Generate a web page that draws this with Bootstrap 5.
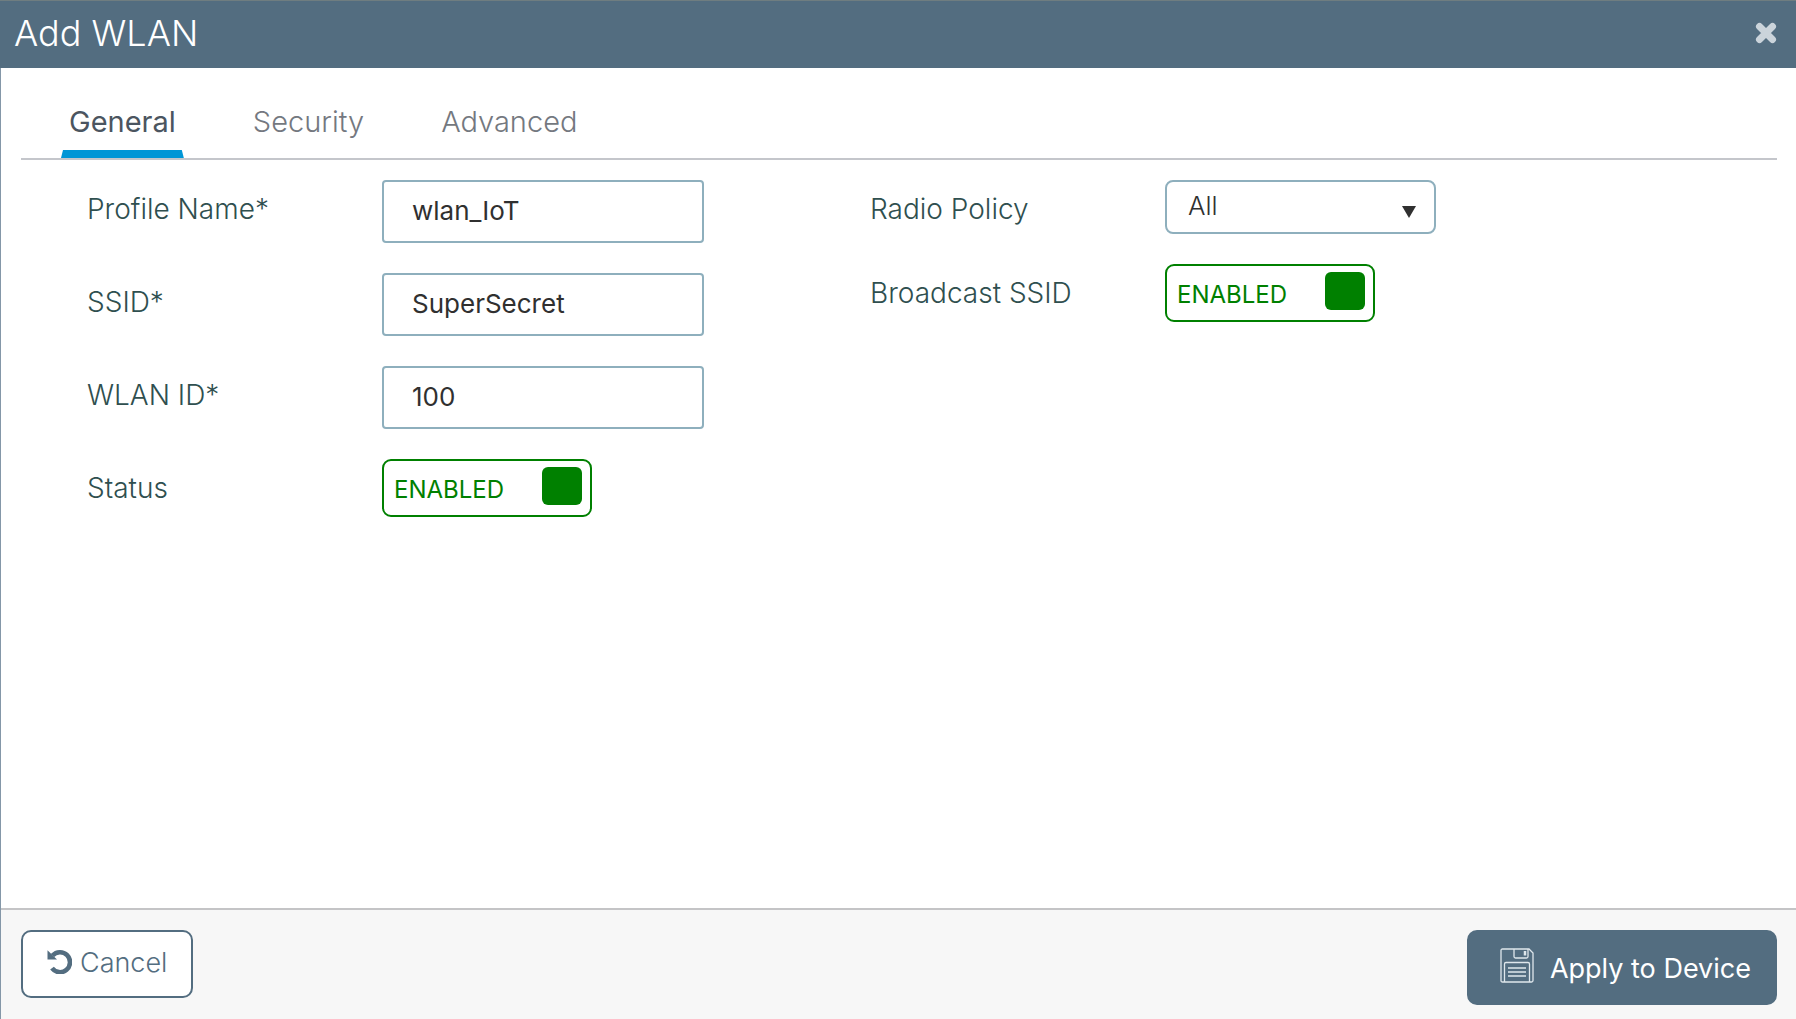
<!DOCTYPE html>
<html lang="en">
<head>
<meta charset="utf-8">
<meta name="viewport" content="width=device-width, initial-scale=1">
<title>Add WLAN</title>
<link href="https://cdn.jsdelivr.net/npm/bootstrap@5.3.0/dist/css/bootstrap.min.css" rel="stylesheet">
<style>
  :root { --slate: #536d80; --field-line: #8eafbd; --on: #008000; }
  body { font-family: Inter, "Liberation Sans", sans-serif; font-weight: 300; font-size: 28px; color: #2f4f4f; }
  .dialog-shell { border-left: 1px solid #8497a8; }
  .dialog-head { background: var(--slate); border-top: 1px solid #6f7d80; margin-left: -1px; padding: 0 19px 0 14px; height: 68px; color: #fff; }
  .dialog-title { font-size: 36px; line-height: 64px; font-weight: 300; }
  .close-x { border: 0; background: none; padding: 0; margin-top: 21px; line-height: 0; color: #cbd4db; }
  .tab-strip { margin: 0 19px 0 20px; padding: 22px 0 0 40px; border-bottom: 2px solid #c4c6cb; gap: 61px; }
  .tab-strip .nav-link { padding: 2px 8px 0; font-size: 29px; line-height: 60px; height: 68px; color: #747880; }
  .tab-strip .nav-link.active { color: #4b5560; font-weight: 400; }
  .tab-strip .nav-link.active::after { content: ""; display: block; height: 8px; margin: -2px -8px 0; background: #0096d6; clip-path: polygon(2px 0, calc(100% - 2px) 0, 100% 100%, 0 100%); }
  .form-area { padding: 20px 143px 0 86px; }
  .field-stack { gap: 30px; }
  .field-stack-tight { gap: 26px; }
  .field-label { width: 295px; line-height: 58px; flex: none; }
  .form-control.field-box { width: 322px; height: 63px; border: 2px solid var(--field-line); border-radius: 4px; padding: 0 28px 3px; font-size: 26px; font-weight: 400; color: #303030; }
  .form-select.policy-pick { width: 271px; height: 54px; border: 2px solid var(--field-line); border-radius: 8px; padding: 0 40px 4px 21px; font-size: 26px; font-weight: 300; color: #303030;
    background-image: url("data:image/svg+xml,%3Csvg xmlns='http://www.w3.org/2000/svg' viewBox='0 0 14 12'%3E%3Cpath fill='%23303030' d='M0 0h14L7 12z'/%3E%3C/svg%3E"); background-size: 14px 12px; background-position: right 18px top 24px; }
  .switch-box { width: 210px; height: 58px; border: 2px solid var(--on); border-radius: 9px; padding: 6px 8px 6px 10px; color: var(--on); font-size: 24px; font-weight: 400; }
  .switch-word { line-height: 46px; }
  .switch-knob { appearance: none; width: 40px; height: 38px; margin: 0; border-radius: 6px; background: #b0b0b0; }
  .switch-knob:checked { background: var(--on); }
  .dialog-foot { border-top: 2px solid #c4c4c6; background: #f7f7f7; padding: 20px 19px 14px 20px; }
  .btn-dialog { border-radius: 10px; border: 2px solid var(--slate); font-size: 27px; font-weight: 300; white-space: nowrap; }
  .btn-cancel { height: 68px; padding: 0 24px 2px; background: #fff; color: var(--slate); gap: 8px; }
  .btn-apply { height: 75px; padding: 4px 24px 0 31px; background: var(--slate); color: #fff; gap: 16px; font-weight: 400; }
  .btn-cancel svg { margin-bottom: 4px; }
  .btn-apply svg { margin-bottom: 8px; }
</style>
<script src="https://cdn.jsdelivr.net/npm/bootstrap@5.3.0/dist/js/bootstrap.bundle.min.js"></script>
</head>
<body>
<div class="dialog-shell d-flex flex-column min-vh-100">
  <header class="dialog-head d-flex justify-content-between align-items-start">
    <h1 class="dialog-title m-0">Add WLAN</h1>
    <button type="button" class="close-x" aria-label="Close">
      <svg width="22" height="22" viewBox="0 0 22 22"><path d="M4.500 4.500 17.500 17.500M17.500 4.500 4.500 17.500" stroke="currentColor" stroke-width="7" stroke-linecap="round" fill="none"/></svg>
    </button>
  </header>

  <main class="flex-grow-1">
    <ul class="nav tab-strip">
      <li class="nav-item"><a class="nav-link active" href="#general" aria-current="page">General</a></li>
      <li class="nav-item"><a class="nav-link" href="#security">Security</a></li>
      <li class="nav-item"><a class="nav-link" href="#advanced">Advanced</a></li>
    </ul>

    <form class="form-area" id="general">
      <div class="row g-0">
        <div class="col-6 d-flex flex-column field-stack">
          <div class="d-flex"><label class="field-label" for="profile">Profile Name*</label><input class="form-control field-box" id="profile" type="text" value="wlan_IoT"></div>
          <div class="d-flex"><label class="field-label" for="ssid">SSID*</label><input class="form-control field-box" id="ssid" type="text" value="SuperSecret"></div>
          <div class="d-flex"><label class="field-label" for="wlanid">WLAN ID*</label><input class="form-control field-box" id="wlanid" type="text" value="100"></div>
          <div class="d-flex"><label class="field-label" for="status">Status</label>
            <div class="switch-box d-flex justify-content-between align-items-start"><span class="switch-word">ENABLED</span><input class="switch-knob" type="checkbox" id="status" checked></div></div>
        </div>
        <div class="col-6 d-flex flex-column field-stack-tight">
          <div class="d-flex align-items-start"><label class="field-label" for="radio">Radio Policy</label>
            <select class="form-select policy-pick" id="radio"><option>All</option></select></div>
          <div class="d-flex"><label class="field-label" for="bcast">Broadcast SSID</label>
            <div class="switch-box d-flex justify-content-between align-items-start"><span class="switch-word">ENABLED</span><input class="switch-knob" type="checkbox" id="bcast" checked></div></div>
        </div>
      </div>
    </form>
  </main>

  <footer class="dialog-foot d-flex justify-content-between align-items-start">
    <button type="button" class="btn btn-dialog btn-cancel d-flex align-items-center">
      <svg width="25" height="25" viewBox="0 0 25 25"><path d="M5.500 6.600A10 10 0 1 1 5 19.200" fill="none" stroke="currentColor" stroke-width="4.600"/><path d="M0.500 1.200V10.500H10z" fill="currentColor"/></svg>
      Cancel
    </button>
    <button type="submit" form="general" class="btn btn-dialog btn-apply d-flex align-items-center">
      <svg width="34" height="35" viewBox="0 0 34 35" fill="none" stroke="#dfe7ec" stroke-width="1.300"><path d="M1 2.500Q1 1 2.500 1H29l4 4v27.500q0 1.500-1.500 1.500h-29Q1 34 1 32.500z"/><path d="M14 1v7.500q0 1.500 1.500 1.500h11q1.500 0 1.500-1.500V1M4.500 34V16q0-1.500 1.500-1.500h22q1.500 0 1.500 1.500v18M8 20h18M8 24h18M8 28h18"/><path d="M25 3v4.500" stroke-width="2.500"/></svg>
      Apply to Device
    </button>
  </footer>
</div>
</body>
</html>
